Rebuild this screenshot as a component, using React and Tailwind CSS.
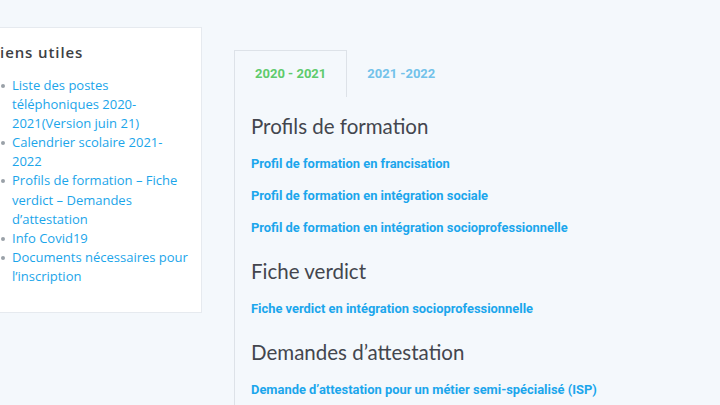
import React from "react";

const sideLinks = [
  "Liste des postes téléphoniques 2020-2021(Version juin 21)",
  "Calendrier scolaire 2021-2022",
  "Profils de formation – Fiche verdict – Demandes d’attestation",
  "Info Covid19",
  "Documents nécessaires pour l’inscription",
];

const sections = [
  {
    title: "Profils de formation",
    links: [
      "Profil de formation en francisation",
      "Profil de formation en intégration sociale",
      "Profil de formation en intégration socioprofessionnelle",
    ],
  },
  {
    title: "Fiche verdict",
    links: ["Fiche verdict en intégration socioprofessionnelle"],
  },
  {
    title: "Demandes d’attestation",
    links: ["Demande d’attestation pour un métier semi-spécialisé (ISP)"],
  },
];

export default function App() {
  return (
    <div className="w-[720px] h-[405px] overflow-hidden bg-[#f4f8fc] flex items-start">
      <aside className="shrink-0 mt-[27px] ml-[-20px] w-[222px] h-[286px] bg-white border border-[#e6eaef] pl-[13px] pr-[10px] pt-[14px] font-['Open_Sans',sans-serif]">
        <h3 className="ml-[-3px] text-[15px] leading-[20px] font-semibold tracking-[0.9px] text-[#3d3f44]">
          Liens utiles
        </h3>
        <ul className="mt-[14px] flex flex-col">
          {sideLinks.map((t) => (
            <li key={t} className="flex text-[13px] leading-[19.1px] text-[#1ba5ea]">
              <span className="w-[18px] shrink-0 flex justify-start pl-[7px] pt-[8px]">
                <span className="w-[4px] h-[4px] rounded-full bg-[#9aa1a8]" />
              </span>
              <span className="flex-1">{t}</span>
            </li>
          ))}
        </ul>
      </aside>

      <main className="ml-[32px] mt-[50px] flex-1 flex flex-col">
        <div className="flex font-['Roboto',sans-serif] text-[13px] font-bold">
          <div className="h-[47px] px-[20px] flex items-center border-l border-t border-r border-[#dde2e8] text-[#5ecb6c]">
            2020 - 2021
          </div>
          <div className="h-[47px] px-[20px] flex items-center text-[#72c2ea]">
            2021 -2022
          </div>
        </div>
        <div className="border-l border-[#dde2e8] pl-[16px] pt-[15px] h-[320px] flex flex-col gap-[21px]">
          {sections.map((s) => (
            <section key={s.title} className="flex flex-col">
              <h2 className="font-['Lato',sans-serif] text-[20.5px] leading-[28px] text-[#43464e] mb-[16px]">
                {s.title}
              </h2>
              <div className="flex flex-col gap-[16px]">
                {s.links.map((l) => (
                  <a
                    key={l}
                    className="font-['Roboto',sans-serif] font-bold text-[12.9px] leading-[16px] text-[#1ba6ec]"
                  >
                    {l}
                  </a>
                ))}
              </div>
            </section>
          ))}
        </div>
      </main>
    </div>
  );
}
